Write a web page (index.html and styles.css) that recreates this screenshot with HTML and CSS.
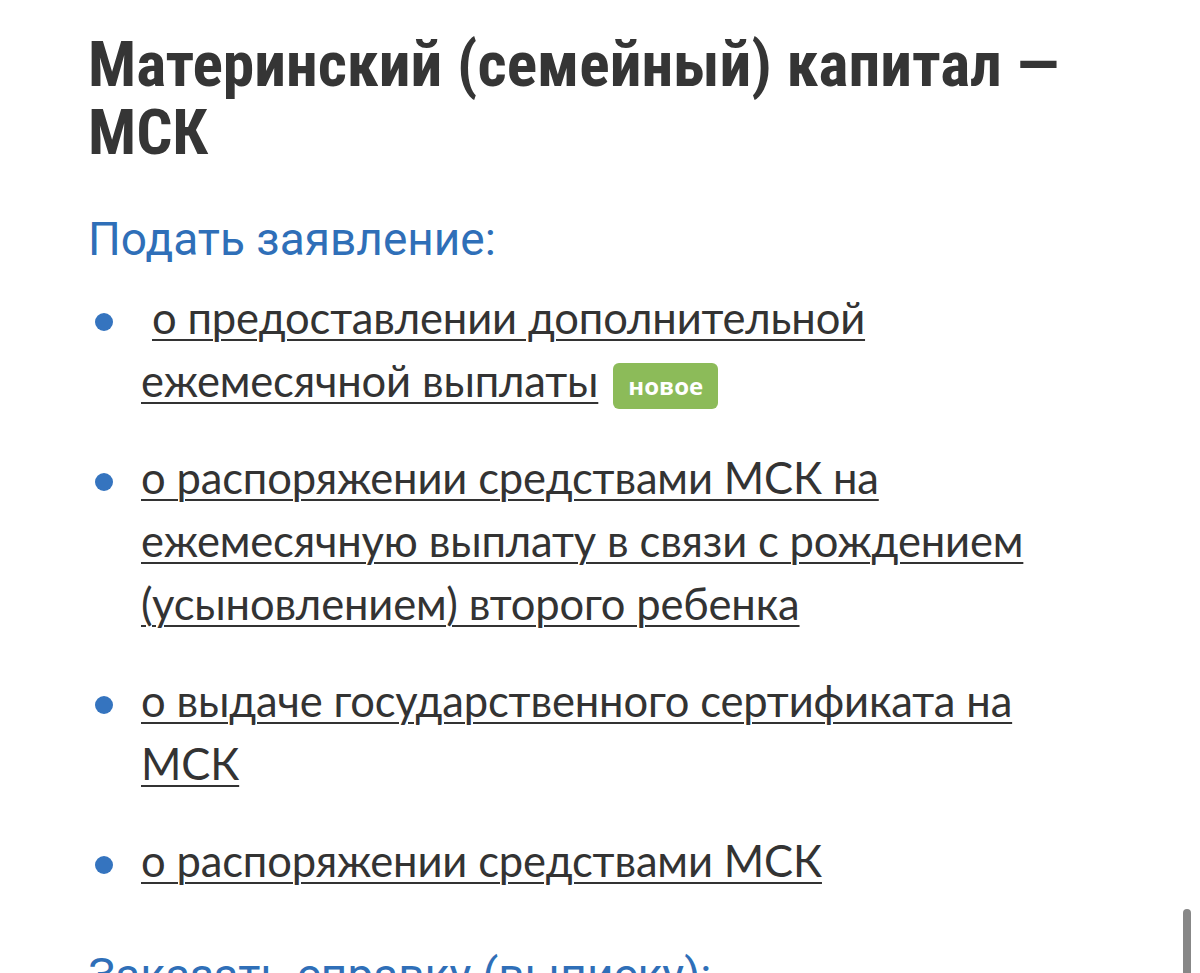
FILE: index.html
```html
<!DOCTYPE html>
<html lang="ru">
<head>
    <meta charset="UTF-8">
    <meta name="viewport" content="width=device-width, initial-scale=1.0">
    <title>Материнский (семейный) капитал — МСК</title>
    <link rel="stylesheet" href="styles.css">
</head>
<body>
    <div class="page">
        <h1 class="page-title">Материнский (семейный) капитал — МСК</h1>

        <h2 class="section-title">Подать заявление:</h2>
        <ul class="service-list">
            <li>&nbsp;<a href="#">о предоставлении дополнительной ежемесячной выплаты</a> <span class="badge">новое</span></li>
            <li><a href="#">о распоряжении средствами МСК на ежемесячную выплату в связи с рождением (усыновлением) второго ребенка</a></li>
            <li><a href="#">о выдаче государственного сертификата на МСК</a></li>
            <li><a href="#">о распоряжении средствами МСК</a></li>
        </ul>

        <h2 class="section-title">Заказать справку (выписку):</h2>
    </div>

    <div class="scroll-thumb"></div>
</body>
</html>
```

FILE: styles.css
```css
* {
    box-sizing: border-box;
}

html, body {
    margin: 0;
    padding: 0;
    background: #ffffff;
    overflow: hidden;
}

.page {
    padding-left: 88px;
    max-width: 1090px;
    color: #333333;
}

.page-title {
    margin: 31px 0 45px;
    font-family: 'Roboto', sans-serif;
    font-stretch: 75%; /* condensed cut */
    font-weight: 700;
    font-size: 63.5px;
    line-height: 68px;
    color: #353535;
}

.section-title {
    margin: 0 0 20px;
    font-family: 'Roboto', sans-serif;
    font-weight: 400;
    font-size: 46px;
    line-height: 54px;
    color: #2f6fb8;
}

.service-list {
    list-style: none;
    margin: 0 0 56px;
    padding: 0;
    font-family: 'Lato', 'Open Sans', sans-serif;
    font-size: 43.5px;
    letter-spacing: -0.15px;
    line-height: 63px;
}

.service-list li {
    position: relative;
    padding-left: 53px;
}

.service-list li + li {
    margin-top: 34px;
}

/* blue dot marker */
.service-list li::before {
    content: '';
    position: absolute;
    left: 7px;
    top: 27px;
    width: 18px;
    height: 18px;
    border-radius: 50%;
    background: #3574bf;
}

.service-list a {
    color: #333333;
    text-decoration: underline;
    text-decoration-thickness: 2px;
    text-underline-offset: 5px;
}

.badge {
    display: inline-block;
    margin-left: 4px;
    padding: 0 15px;
    height: 46px;
    line-height: 46px;
    vertical-align: 2px;
    border-radius: 6px;
    background: #8cbb59;
    color: #ffffff;
    font-family: 'Open Sans', sans-serif;
    font-weight: 700;
    font-size: 24px;
    letter-spacing: 0;
}

.scroll-thumb {
    position: fixed;
    left: 1183px;
    top: 909px;
    width: 8px;
    height: 80px;
    border-radius: 4px;
    background: #878787;
}
```
